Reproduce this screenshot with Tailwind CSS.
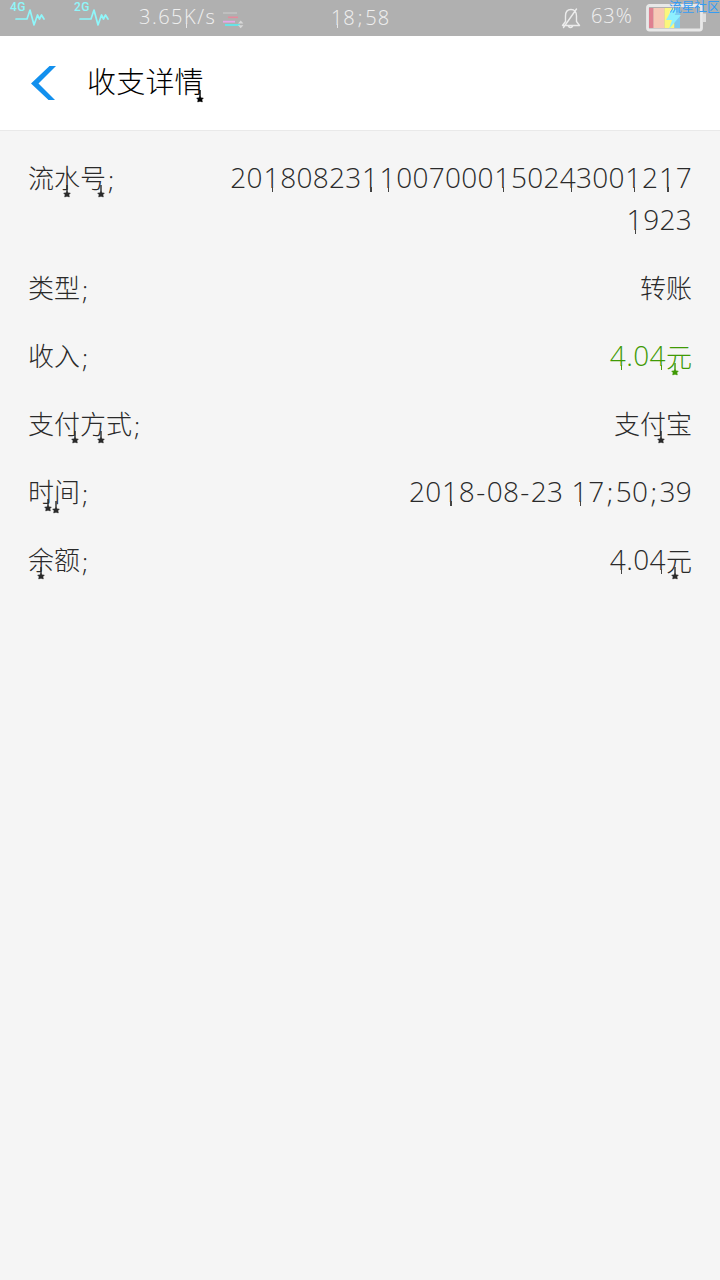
<!DOCTYPE html>
<html lang="zh-CN">
<head>
<meta charset="utf-8">
<title>收支详情</title>
<script src="https://cdn.jsdelivr.net/npm/@tailwindcss/browser@4"></script>
</head>
<body class="min-h-screen bg-[#f5f5f5] font-light text-[#2a2a2a] font-['Open_Sans','Noto_Sans_CJK_SC',sans-serif]">
<svg class="hidden"><symbol id="pin" viewBox="0 0 8 30"><path d="M4 17V25" stroke="currentColor" stroke-width="1.400"/><path d="M4 23.500l1 1.400 2.300.2-1.400 1.600.4 2.200L4 28.200l-2.300.7.4-2.200-1.400-1.600 2.300-.2z" fill="currentColor" stroke="currentColor" stroke-width=".6"/></symbol></svg>

<div class="relative flex h-9 bg-[#b0b0b0] text-[#f0f0f0]">
  <svg class="h-9 w-[720px]" viewBox="0 0 720 36" fill="none">
    <g stroke="#8ff6fa" stroke-width="1.7" stroke-linejoin="round" stroke-linecap="round">
      <path d="M16 19h11l3-9 4 15 3.500-10 2 4 2-4 2.500 4"/>
      <path d="M80 19h11l3-9 4 15 3.500-10 2 4 2-4 2.500 4"/>
    </g>
    <path d="M223 13h14" stroke="#c4c4c4" stroke-width="1.5"/>
    <path d="M228 17.300h10" stroke="#e58a9d" stroke-width="1.600"/>
    <path d="M223 21.700h12" stroke="#e6a8e8" stroke-width="1.800"/>
    <path d="M225 25h15" stroke="#67e3e6" stroke-width="2"/>
    <path d="M238 23.500l2.700-3 2.700 3zM238 25.300l2.700 3 2.700-3z" fill="#d8d8d8"/>
    <path d="M562.500 25.500h17l-3-4v-5.500c0-4-2-6.500-5.500-6.500s-5.500 2.500-5.500 6.500v5.500zM568.500 26.500q2 2 4 0M563.500 27.500l13-18.500" stroke="#ececec" stroke-width="1.400" stroke-linejoin="round" stroke-linecap="round"/>
    <rect x="647.500" y="5.500" width="54" height="24.500" rx="2" stroke="#e8e8e8" stroke-width="2.800"/>
    <path d="M703 13.500h3v8.500h-3z" fill="#dedede"/>
    <path d="M649 8h4.500v20H649z" fill="#df8090"/>
    <path d="M653.500 8h11v20h-11z" fill="#f7c8b6"/>
    <path d="M664.500 8h10v20h-10z" fill="#fbf67c"/>
    <path d="M674.500 8h5.500v20h-5.500z" fill="#7ecbf0"/>
    <path d="M671.500 10L666 20h6l-3 9 12-14h-6.500l3-5z" fill="#8defff"/>
  </svg>
  <span class="absolute left-[10px] top-px text-[12px] leading-3 font-medium text-[#8ff6fa] font-['Roboto',sans-serif] tracking-[.5px]">4G</span>
  <span class="absolute left-[74px] top-px text-[12px] leading-3 font-medium text-[#8ff6fa] font-['Roboto',sans-serif] tracking-[.5px]">2G</span>
  <span class="absolute left-[139px] top-[5px] text-[20px] leading-6 tracking-[1.500px]">3.65<span class="relative after:absolute after:left-[2px] after:top-[20px] after:h-[5px] after:w-px after:bg-[#e6e6e6]">K</span>/s</span>
  <span class="absolute left-[331px] top-[6px] text-[20px] leading-6 tracking-[.9px]"><span class="relative after:absolute after:left-[6px] after:top-[20px] after:h-[4px] after:w-px after:bg-[#e6e6e6]">1</span>8<span class="mx-[2px]">;</span>58</span>
  <span class="absolute left-[591px] top-[4px] text-[20px] leading-6 tracking-[.9px]">63%</span>
  <span class="absolute left-[669px] top-0 whitespace-nowrap text-[12.700px] leading-[13px] font-normal text-[#359cf4]">流星社区</span>
</div>

<header class="flex h-[95px] items-center border-b border-[#e9e9e9] bg-white pl-[30px] text-black">
  <svg class="h-[34px] w-[26px]" viewBox="0 0 26 34"><path d="M19.500 0H26L8.500 17.500 25 34h-6.500L1 17.500z" fill="#1290ee"/></svg>
  <h1 class="relative -top-px ml-[31px] text-[29px] leading-10 tracking-[.2px]">收支详情<svg class="absolute left-[109px] top-[11px] h-[30px] w-2"><use href="#pin"/></svg></h1>
</header>

<main class="flex flex-col gap-[26px] pt-[26px] pl-7 pr-7 text-[26px] leading-[42px]">
  <div class="flex justify-between">
    <span class="relative h-[42px]">流水号<span class="relative top-0.5 ml-0.5">;</span><svg class="absolute left-[35px] top-[11px] h-[30px] w-2"><use href="#pin"/></svg><svg class="absolute left-[69px] top-[11px] h-[30px] w-2"><use href="#pin"/></svg></span>
    <span class="relative -top-px text-right text-[28px] tracking-[.25px]">20<span class="relative px-[.6px] after:absolute after:left-[9px] after:bottom-[4px] after:h-[5px] after:w-[1.500px] after:bg-[#444]">1</span>80823<span class="relative px-[.6px] after:absolute after:left-[9px] after:bottom-[4px] after:h-[5px] after:w-[1.500px] after:bg-[#444]">1</span><span class="relative px-[.6px] after:absolute after:left-[9px] after:bottom-[4px] after:h-[5px] after:w-[1.500px] after:bg-[#444]">1</span>007000<span class="relative px-[.6px] after:absolute after:left-[9px] after:bottom-[4px] after:h-[5px] after:w-[1.500px] after:bg-[#444]">1</span>502<span class="relative after:absolute after:left-[11px] after:bottom-[4px] after:h-[5px] after:w-[1.500px] after:bg-[#444]">4</span>300<span class="relative px-[.6px] after:absolute after:left-[9px] after:bottom-[4px] after:h-[5px] after:w-[1.500px] after:bg-[#444]">1</span>2<span class="relative px-[.6px] after:absolute after:left-[9px] after:bottom-[4px] after:h-[5px] after:w-[1.500px] after:bg-[#444]">1</span>7<br><span class="relative px-[.6px] after:absolute after:left-[9px] after:bottom-[4px] after:h-[5px] after:w-[1.500px] after:bg-[#444]">1</span>923</span>
  </div>
  <div class="flex justify-between">
    <span class="relative h-[42px]">类型<span class="relative top-0.5 ml-0.5">;</span></span>
    <span class="h-[42px]">转账</span>
  </div>
  <div class="flex justify-between">
    <span class="relative h-[42px]">收入<span class="relative top-0.5 ml-0.5">;</span></span>
    <span class="relative h-[42px] text-[#3f9a05]"><span class="relative -top-px text-[28px] tracking-[.4px]"><span class="relative after:absolute after:left-[11px] after:bottom-[4px] after:h-[5px] after:w-[1.500px] after:bg-[#4a9d10]">4</span>.0<span class="relative after:absolute after:left-[11px] after:bottom-[4px] after:h-[5px] after:w-[1.500px] after:bg-[#4a9d10]">4</span></span>元<svg class="absolute right-[13px] top-[11px] h-[30px] w-2"><use href="#pin"/></svg></span>
  </div>
  <div class="flex justify-between">
    <span class="relative h-[42px]">支付方式<span class="relative top-0.5 ml-0.5">;</span><svg class="absolute left-[43px] top-[11px] h-[30px] w-2"><use href="#pin"/></svg><svg class="absolute left-[69px] top-[11px] h-[30px] w-2"><use href="#pin"/></svg></span>
    <span class="relative h-[42px]">支付宝<svg class="absolute right-[27px] top-[11px] h-[30px] w-2"><use href="#pin"/></svg></span>
  </div>
  <div class="flex justify-between">
    <span class="relative h-[42px]">时间<span class="relative top-0.5 ml-0.5">;</span><svg class="absolute left-[16px] top-[11px] h-[30px] w-2"><use href="#pin"/></svg><svg class="absolute left-[24px] top-[13px] h-[30px] w-2"><use href="#pin"/></svg></span>
    <span class="relative -top-px h-[42px] text-[28px] tracking-[.25px]">20<span class="relative px-[.6px] after:absolute after:left-[9px] after:bottom-[4px] after:h-[5px] after:w-[1.500px] after:bg-[#444]">1</span>8<span class="mx-[1.200px]">-</span>08<span class="mx-[1.200px]">-</span>23 <span class="relative px-[.6px] after:absolute after:left-[9px] after:bottom-[4px] after:h-[5px] after:w-[1.500px] after:bg-[#444]">1</span>7<span class="relative top-px mx-[2.200px]">;</span>50<span class="relative top-px mx-[2.200px]">;</span>39</span>
  </div>
  <div class="flex justify-between">
    <span class="relative h-[42px]">余额<span class="relative top-0.5 ml-0.5">;</span><svg class="absolute left-[9px] top-[11px] h-[30px] w-2"><use href="#pin"/></svg></span>
    <span class="relative h-[42px]"><span class="relative -top-px text-[28px] tracking-[.4px]"><span class="relative after:absolute after:left-[11px] after:bottom-[4px] after:h-[5px] after:w-[1.500px] after:bg-[#444]">4</span>.0<span class="relative after:absolute after:left-[11px] after:bottom-[4px] after:h-[5px] after:w-[1.500px] after:bg-[#444]">4</span></span>元<svg class="absolute right-[13px] top-[11px] h-[30px] w-2"><use href="#pin"/></svg></span>
  </div>
</main>
</body>
</html>
